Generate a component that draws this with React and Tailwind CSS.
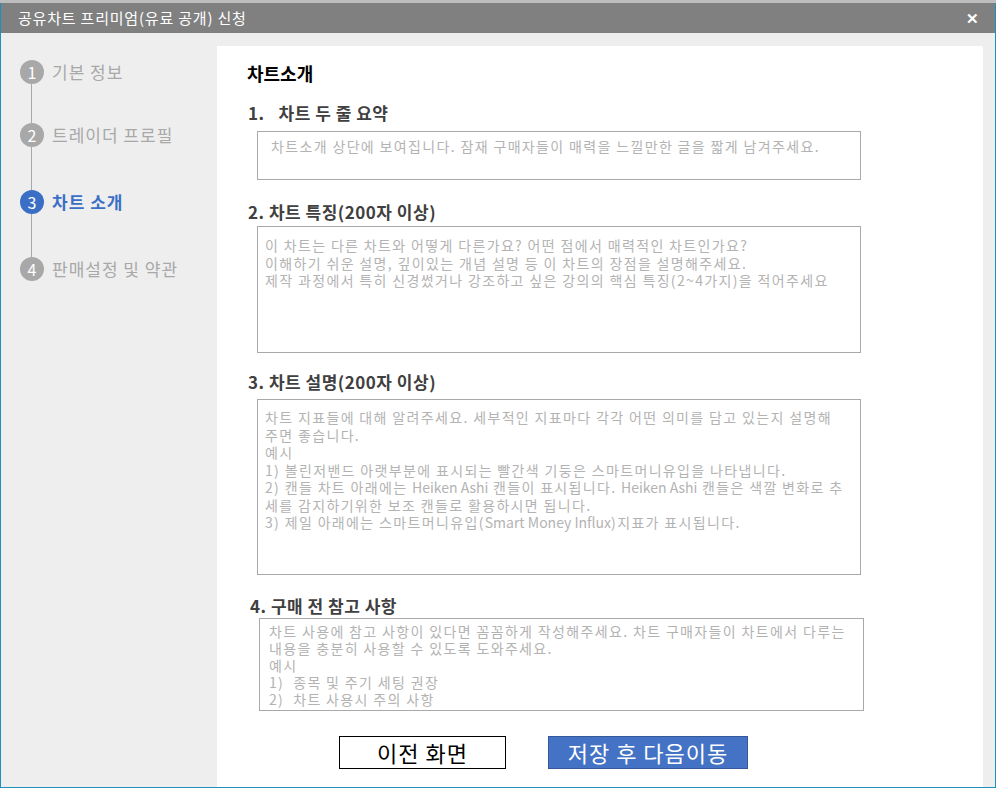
import React from 'react';

const font = { fontFamily: '"Malgun Gothic", "Noto Sans CJK KR", "Noto Sans", sans-serif' };

const steps = [
    { n: 1, text: '기본 정보' },
    { n: 2, text: '트레이더 프로필' },
    { n: 3, text: '차트 소개', active: true },
    { n: 4, text: '판매설정 및 약관' },
];

// gap (connector height) under each step
const connectors = [39, 43, 43];

const Sidebar = () => (
    <div className="w-[216px] shrink-0 pl-[19px] pt-[14px]">
        {steps.map((s, i) => (
            <div key={s.n}>
                <div className="flex items-center h-[24px]">
                    <div
                        className={
                            s.active
                                ? 'w-[24px] h-[24px] rounded-full bg-[#3b6fc5] text-white text-[16px] flex items-center justify-center'
                                : 'w-[24px] h-[24px] rounded-full bg-[#a8a8a8] text-white text-[16px] flex items-center justify-center'
                        }
                    >
                        {s.n}
                    </div>
                    <span
                        className={
                            s.active
                                ? 'ml-[8px] text-[17px] tracking-[1px] font-bold text-[#3b6fc5]'
                                : 'ml-[8px] text-[17px] tracking-[1px] text-[#a8a8a8]'
                        }
                    >
                        {s.text}
                    </span>
                </div>
                {i < connectors.length && (
                    <div className="ml-[11px] w-px bg-[#a8a8a8]" style={{ height: connectors[i] }} />
                )}
            </div>
        ))}
    </div>
);

// latin runs keep normal spacing, korean gets the wide look of the original
const En = ({ children }) => <span className="tracking-normal">{children}</span>;

const Box = ({ children, className }) => (
    <div className={'border border-[#a9a9a9] bg-white text-[14px] leading-[17.5px] tracking-[1.35px] text-[#b3b3b3] whitespace-pre ' + className}>
        {children}
    </div>
);

const Label = ({ children, className }) => (
    <div className={'text-[17px] leading-[22px] tracking-[0.5px] font-bold text-[#404040] ' + className}>{children}</div>
);

export default function App() {
    return (
        <div className="w-[996px] h-[788px] bg-[#c8c8c8] overflow-hidden" style={font}>
            <div className="h-[3px] bg-[#bdbdbd]" />
            <div className="h-[785px] flex flex-col border-x border-b border-[#1f8fbf]">
                <div className="h-[30px] shrink-0 bg-[#808080] flex items-center justify-between pl-[17px] pr-[16px]">
                    <span className="text-white text-[15px] tracking-[0.8px]">공유차트 프리미엄(유료 공개) 신청</span>
                    <span className="text-white text-[15px] font-bold">✕</span>
                </div>
                <div className="flex-1 flex bg-[#eeeeee] pt-[13px] pr-[12px]">
                    <Sidebar />
                    <div className="flex-1 bg-white rounded-tr-[3px] pl-[30px] pt-[15px]">
                        <div className="text-[18px] leading-[24px] font-bold text-black">차트소개</div>

                        <Label className="mt-[17px] ml-px flex">
                            <span>1.</span>
                            <span className="ml-[14px]">차트 두 줄 요약</span>
                        </Label>
                        <Box className="mt-[7px] ml-[10px] w-[604px] h-[49px] pl-[13px] pt-[6px]">
                            차트소개 상단에 보여집니다. 잠재 구매자들이 매력을 느낄만한 글을 짧게 남겨주세요.
                        </Box>

                        <Label className="mt-[21px] ml-px">2. 차트 특징(200자 이상)</Label>
                        <Box className="mt-[3px] ml-[10px] w-[604px] h-[127px] pl-[7px] pt-[10px]">
                            {'이 차트는 다른 차트와 어떻게 다른가요? 어떤 점에서 매력적인 차트인가요?\n'}
                            {'이해하기 쉬운 설명, 깊이있는 개념 설명 등 이 차트의 장점을 설명해주세요.\n'}
                            {'제작 과정에서 특히 신경썼거나 강조하고 싶은 강의의 핵심 특징(2~4가지)을 적어주세요'}
                        </Box>

                        <Label className="mt-[18px] ml-px">3. 차트 설명(200자 이상)</Label>
                        <Box className="mt-[6px] ml-[10px] w-[604px] h-[176px] pl-[7px] pt-[9px]">
                            {'차트 지표들에 대해 알려주세요. 세부적인 지표마다 각각 어떤 의미를 담고 있는지 설명해\n'}
                            {'주면 좋습니다.\n'}
                            {'예시\n'}
                            {'1) 볼린저밴드 아랫부분에 표시되는 빨간색 기둥은 스마트머니유입을 나타냅니다.\n'}
                            {'2) 캔들 차트 아래에는 '}<En>Heiken Ashi</En>{' 캔들이 표시됩니다. '}<En>Heiken Ashi</En>{' 캔들은 색깔 변화로 추\n'}
                            {'세를 감지하기위한 보조 캔들로 활용하시면 됩니다.\n'}
                            {'3) 제일 아래에는 스마트머니유입('}<En>Smart Money Influx</En>{')지표가 표시됩니다.'}
                        </Box>

                        <Label className="mt-[20px] ml-[3px]">4. 구매 전 참고 사항</Label>
                        <Box className="mt-px ml-[12px] w-[605px] h-[93px] pl-[9px] pt-[4px] leading-[17px]">
                            {'차트 사용에 참고 사항이 있다면 꼼꼼하게 작성해주세요. 차트 구매자들이 차트에서 다루는\n'}
                            {'내용을 충분히 사용할 수 있도록 도와주세요.\n'}
                            {'예시\n'}
                            {'1)  종목 및 주기 세팅 권장\n'}
                            {'2)  차트 사용시 주의 사항'}
                        </Box>

                        <div className="mt-[25px] ml-[92px] flex gap-[42px]">
                            <button className="w-[167px] h-[33px] border border-black bg-white text-black text-[22px] tracking-[1px] flex items-center justify-center">
                                이전 화면
                            </button>
                            <button className="w-[200px] h-[33px] border border-[#34589a] bg-[#4472c4] text-white text-[22px] tracking-[1px] flex items-center justify-center">
                                저장 후 다음이동
                            </button>
                        </div>
                    </div>
                </div>
            </div>
        </div>
    );
}
